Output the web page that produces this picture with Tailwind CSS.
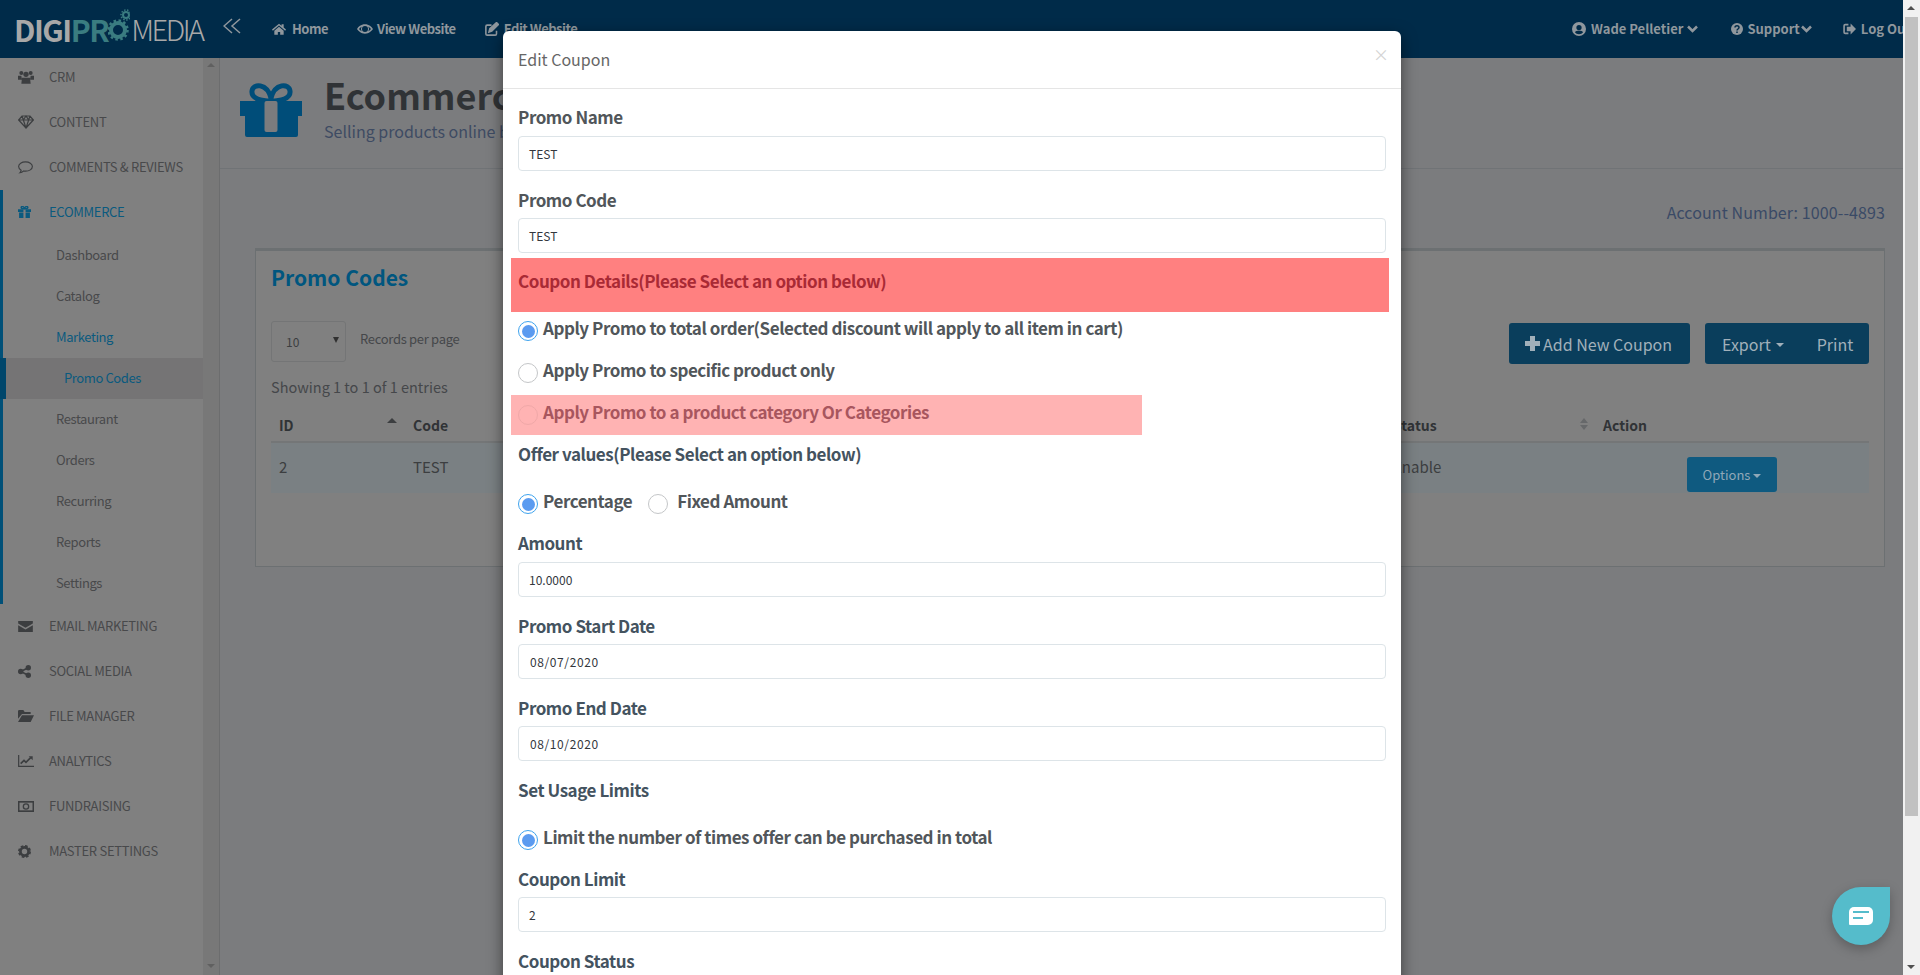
<!DOCTYPE html>
<html lang="en">
<head>
  <meta charset="UTF-8">
  <title>Edit Coupon</title>
  <script src="https://cdn.jsdelivr.net/npm/@tailwindcss/browser@4"></script>
</head>
<body class="h-[975px] overflow-hidden bg-[#7b7c7e] font-['Noto_Sans_CJK_SC','Noto_Sans',sans-serif] text-[#3c3e40]">

  <div class="flex h-[975px]">
    <!-- page -->
    <div class="relative w-[1903px] h-[975px] overflow-hidden shrink-0">

      <!-- top bar -->
      <header class="relative z-10 flex items-center h-[58px] bg-[#002b49] text-[#8f979d] text-[13px] tracking-[-0.5px] font-semibold whitespace-nowrap">
        <div class="relative flex items-center w-[223px] h-full pl-[14px] shrink-0 text-[#a8a8a8]">
          <span class="text-[30px] font-bold tracking-[-1.500px]">DIGI</span><span class="text-[30px] font-bold tracking-[-1.500px] text-[#3a7c80]">PR</span>
          <svg class="w-[22px] h-[34px] ml-[0px] mt-[-8px] shrink-0" viewBox="0 0 22 34" fill="none" stroke="#3a7c80">
            <circle cx="10" cy="22" r="7" stroke-width="4"/>
            <circle cx="10" cy="22" r="9.500" stroke-width="2.500" stroke-dasharray="2.500 2.500"/>
            <circle cx="18" cy="7" r="3" stroke-width="2"/>
            <circle cx="18" cy="7" r="5" stroke-width="1.500" stroke-dasharray="1.500 1.500"/>
          </svg>
          <span class="ml-[1px] text-[29px] font-light tracking-[-2.500px] text-[#a8a8a8]">MEDIA</span>
        </div>
        <svg class="w-[18px] h-[18px] mb-[5px] shrink-0" viewBox="0 0 18 18" fill="none" stroke="#8f979d" stroke-width="1.500"><path d="M9 1 1 8l8 7M17 1 9 8l8 7"/></svg>
        <svg class="ml-[31px] w-[14px] h-[14px] shrink-0" viewBox="0 0 24 24" fill="#8f979d"><path d="M12 3 0 13l1.500 2L12 6l10.500 9 1.500-2-4-3.400V4h-3.500v2.600zM4 15v7h6v-5h4v5h6v-7l-8-6.700z"/></svg>
        <span class="ml-[6px]">Home</span>
        <svg class="ml-[29px] w-[16px] h-[16px] shrink-0" viewBox="0 0 24 24" fill="#8f979d"><path fill-rule="evenodd" d="M12 5C6 5 2 9 0 12c2 3 6 7 12 7s10-4 12-7c-2-3-6-7-12-7zm0 2.500a4.500 4.500 0 1 1 0 9 4.500 4.500 0 0 1 0-9zM3 12c1-1.300 2.300-2.600 4-3.500a6 6 0 0 0 0 7C5.300 14.600 4 13.300 3 12zm14-3.500c1.700.9 3 2.200 4 3.500-1 1.300-2.300 2.600-4 3.500a6 6 0 0 0 0-7z"/></svg>
        <span class="ml-[4px]">View Website</span>
        <svg class="ml-[28px] w-[15px] h-[15px] shrink-0" viewBox="0 0 24 24" fill="none" stroke="#8f979d" stroke-width="2.500"><path d="M20 14v5a2 2 0 0 1-2 2H5a2 2 0 0 1-2-2V7a2 2 0 0 1 2-2h7"/><path stroke-width="4" d="M9 15l1-4L20 2l2 2-10 10z"/></svg>
        <span class="ml-[5px]">Edit Website</span>

        <div class="ml-auto flex items-center w-[331px] shrink-0 overflow-hidden tracking-normal">
          <svg class="w-[14px] h-[14px] shrink-0" viewBox="0 0 24 24" fill="#8f979d"><path fill-rule="evenodd" d="M12 0a12 12 0 1 0 0 24 12 12 0 0 0 0-24zm0 5a4.500 4.500 0 1 1 0 9 4.500 4.500 0 0 1 0-9zm0 16c-3 0-5.500-1.300-7-3.400C6 15.600 8.500 15 12 15s6 .6 7 2.600C17.500 19.700 15 21 12 21z"/></svg>
          <span class="ml-[5px]">Wade Pelletier</span>
          <svg class="ml-[4px] w-[11px] h-[8px] shrink-0" viewBox="0 0 11 8" fill="none" stroke="#8f979d" stroke-width="2.500"><path d="M1 1.500 5.500 6 10 1.500"/></svg>
          <svg class="ml-[33px] w-[12px] h-[12px] shrink-0" viewBox="0 0 24 24"><circle cx="12" cy="12" r="12" fill="#8f979d"/><path d="M8 9c0-5 8-5 8 0 0 3-4 3-4 6M12 17v3" fill="none" stroke="#002b49" stroke-width="3"/></svg>
          <span class="ml-[4px]">Support</span>
          <svg class="ml-[1px] w-[11px] h-[8px] shrink-0" viewBox="0 0 11 8" fill="none" stroke="#8f979d" stroke-width="2.500"><path d="M1 1.500 5.500 6 10 1.500"/></svg>
          <svg class="ml-[31px] w-[13px] h-[12px] shrink-0" viewBox="0 0 24 22" fill="none" stroke="#8f979d" stroke-width="3"><path d="M10 3H4a2 2 0 0 0-2 2v12a2 2 0 0 0 2 2h6"/><path fill="#8f979d" stroke="none" d="M14 1l10 10-10 10v-6H7V7h7z"/></svg>
          <span class="ml-[5px]">Log Out</span>
        </div>
      </header>

      <div class="flex h-[917px]">
        <!-- sidebar -->
        <aside class="flex w-[220px] h-full shrink-0 border-r border-[#6c6d6e] bg-[#808080] overflow-hidden">
          <nav class="w-[203px] shrink-0 -mt-[3px] text-[13px] tracking-[-0.3px] text-[#48494b]">
            <a class="flex items-center h-[45px] pl-[18px] pb-[1px]"><svg class="w-[16px] h-[14px] shrink-0" viewBox="0 0 24 20" fill="#3c3e40"><circle cx="5" cy="4" r="3"/><circle cx="19" cy="4" r="3"/><circle cx="12" cy="6" r="4"/><path d="M0 8h5l1 6H0zM24 8h-5l-1 6h6zM6 11h12l1 9H5z"/></svg><span class="ml-[15px]">CRM</span></a>
            <a class="flex items-center h-[45px] pl-[18px] pb-[1px]"><svg class="w-[16px] h-[14px] shrink-0" viewBox="0 0 24 20" fill="none" stroke="#3c3e40" stroke-width="1.800"><path d="M6 1h12l5 6-11 12L1 7zM1 7h22M8 7l4 12 4-12M6 1l2 6 4-6 4 6 2-6"/></svg><span class="ml-[15px]">CONTENT</span></a>
            <a class="flex items-center h-[45px] pl-[18px] pb-[1px]"><svg class="w-[15px] h-[13px] shrink-0" viewBox="0 0 24 20" fill="none" stroke="#3c3e40" stroke-width="1.800"><path d="M12 1C6 1 1 4 1 8.500c0 2.500 1.500 4.500 4 6-.3 1.500-1 3-2 4 2.500-.3 4.500-1.500 6-3 1 .2 2 .3 3 .3 6 0 11-3 11-7.300S18 1 12 1z"/></svg><span class="ml-[16px]">COMMENTS &amp; REVIEWS</span></a>
            <div class="border-l-[3px] border-[#005078]">
              <a class="flex items-center h-[45px] pl-[15px] pb-[1px] text-[#0a5a7f]"><svg class="w-[13px] h-[12px] shrink-0" viewBox="0 0 24 22" fill="#0a5a7f"><path d="M0 6h24v5H0zM2 12h20v10H2z"/><path d="M10 6h4v16h-4z" fill="#808080"/><path d="M12 5C8 5 5 4 6 2s5-2 6 3c1-5 5-5 6-3s-2 3-6 3z" fill="none" stroke="#0a5a7f" stroke-width="2.500"/></svg><span class="ml-[18px]">ECOMMERCE</span></a>
              <a class="flex items-center h-[41px] pl-[53px] pb-[2px] tracking-[-0.4px]">Dashboard</a>
              <a class="flex items-center h-[41px] pl-[53px] pb-[2px] tracking-[-0.4px]">Catalog</a>
              <a class="flex items-center h-[41px] pl-[53px] pb-[2px] tracking-[-0.4px] text-[#0a5a7f]">Marketing</a>
              <a class="flex items-center h-[41px] pl-[58px] pb-[2px] -ml-[3px] tracking-[-0.4px] border-l-[6px] border-[#00466b] bg-[#757475] text-[#0a5a7f]">Promo Codes</a>
              <a class="flex items-center h-[41px] pl-[53px] pb-[2px] tracking-[-0.4px]">Restaurant</a>
              <a class="flex items-center h-[41px] pl-[53px] pb-[2px] tracking-[-0.4px]">Orders</a>
              <a class="flex items-center h-[41px] pl-[53px] pb-[2px] tracking-[-0.4px]">Recurring</a>
              <a class="flex items-center h-[41px] pl-[53px] pb-[2px] tracking-[-0.4px]">Reports</a>
              <a class="flex items-center h-[41px] pl-[53px] pb-[2px] tracking-[-0.4px]">Settings</a>
            </div>
            <a class="flex items-center h-[45px] pl-[18px] pb-[1px]"><svg class="w-[15px] h-[11px] shrink-0" viewBox="0 0 24 18" fill="#3c3e40"><path d="M0 0h24v4L12 11 0 4zM0 7l12 7 12-7v11H0z"/></svg><span class="ml-[16px]">EMAIL MARKETING</span></a>
            <a class="flex items-center h-[45px] pl-[18px] pb-[1px]"><svg class="w-[13px] h-[13px] shrink-0" viewBox="0 0 24 24" fill="#3c3e40"><circle cx="19" cy="5" r="5"/><circle cx="19" cy="19" r="5"/><circle cx="5" cy="12" r="5"/><path d="M5 12 19 5M5 12l14 7" stroke="#3c3e40" stroke-width="3"/></svg><span class="ml-[18px]">SOCIAL MEDIA</span></a>
            <a class="flex items-center h-[45px] pl-[18px] pb-[1px]"><svg class="w-[16px] h-[12px] shrink-0" viewBox="0 0 24 18" fill="#3c3e40"><path d="M0 2a2 2 0 0 1 2-2h6l2 3h9v3H6L0 13zM6 8h18l-5 10H0z"/></svg><span class="ml-[15px]">FILE MANAGER</span></a>
            <a class="flex items-center h-[45px] pl-[18px] pb-[1px]"><svg class="w-[16px] h-[12px] shrink-0" viewBox="0 0 24 18" fill="none" stroke="#3c3e40" stroke-width="1.800"><path d="M1 0v17h23"/><path stroke-width="2.500" d="M4 13l5-5 3 3 7-7"/><path fill="#3c3e40" stroke="none" d="M16 2h6v6z"/></svg><span class="ml-[15px]">ANALYTICS</span></a>
            <a class="flex items-center h-[45px] pl-[18px] pb-[1px]"><svg class="w-[16px] h-[11px] shrink-0" viewBox="0 0 24 16" fill="none" stroke="#3c3e40" stroke-width="2.500"><rect x="1" y="1" width="22" height="14"/><circle cx="12" cy="8" r="4" stroke-width="2"/></svg><span class="ml-[15px]">FUNDRAISING</span></a>
            <a class="flex items-center h-[45px] pl-[18px] pb-[1px]"><svg class="w-[13px] h-[13px] shrink-0" viewBox="0 0 24 24"><circle cx="12" cy="12" r="7.500" fill="none" stroke="#3c3e40" stroke-width="5"/><circle cx="12" cy="12" r="10.500" fill="none" stroke="#3c3e40" stroke-width="3" stroke-dasharray="5 3.200"/></svg><span class="ml-[18px]">MASTER SETTINGS</span></a>
          </nav>
          <div class="relative w-[16px] shrink-0 bg-[#787878]">
            <span class="absolute left-[4px] top-[5px] border-x-[4px] border-b-[4px] border-x-transparent border-b-[#606060]"></span>
            <span class="absolute left-[4px] bottom-[7px] border-x-[4px] border-t-[4px] border-x-transparent border-t-[#606060]"></span>
          </div>
        </aside>

        <!-- main -->
        <main class="flex-1 min-w-0">
          <div class="flex h-[111px] border-b border-[#707376] pl-[20px] pt-[25px]">
            <svg class="w-[62px] h-[54px] shrink-0" viewBox="0 0 62 54" fill="#004d79">
              <path d="M31 18C22 18 11 16 12 8c1-8 15-8 19 7 4-15 18-15 19-7 1 8-10 10-19 10z" fill="none" stroke="#004d79" stroke-width="5"/>
              <path d="M0 18h62v15h-4v19a2 2 0 0 1-2 2H7a2 2 0 0 1-2-2V33H0z"/>
              <rect x="24.500" y="18" width="13" height="31" rx="2" fill="#7b7c7e"/>
            </svg>
            <div class="ml-[22px] -mt-[6px]">
              <h1 class="text-[36px] leading-[34px] font-bold text-[#303336]">Ecommerce</h1>
              <p class="mt-[8px] text-[16px] leading-[24px] text-[#3e4b63]">Selling products online by</p>
            </div>
          </div>
          <p class="mt-[30px] pr-[18px] text-right text-[16px] tracking-[0.1px] leading-[26px] text-[#3a4a66]">Account Number: 1000--4893</p>
          <section class="ml-[35px] mr-[18px] mt-[23px] h-[319px] border border-t-[3px] border-[#6c7072] bg-[#808080] px-[15px]">
            <h2 class="mt-[11px] text-[21px] leading-[30px] font-semibold text-[#00567f]">Promo Codes</h2>
            <div class="flex mt-[29px] h-[41px]">
              <div class="relative w-[75px] h-[41px] rounded-[3px] border border-[#747576]">
                <span class="absolute left-[14px] top-[12px] text-[12px] leading-[16px]">10</span>
                <span class="absolute left-[61px] top-[15px] border-x-[3px] border-t-[6px] border-x-transparent border-t-[#303030]"></span>
              </div>
              <span class="ml-[14px] mt-[6px] text-[13px] tracking-[-0.3px] leading-[24px] text-[#45474a]">Records per page</span>
              <div class="ml-auto flex gap-[15px] text-[16px] text-[#a1b0ba] mt-[2px]">
                <button class="flex items-center h-[41px] w-[181px] pl-[16px] rounded-[3px] bg-[#0a3e5c]">
                  <svg class="w-[15px] h-[15px] mr-[3px]" viewBox="0 0 15 15" fill="#a1b0ba"><path d="M5 0h5v5h5v5h-5v5H5v-5H0V5h5z"/></svg>Add New Coupon
                </button>
                <div class="flex items-center h-[41px] w-[164px] pl-[17px] rounded-[3px] bg-[#0a3e5c]">
                  <span>Export</span><span class="ml-[5px] mt-[3px] border-x-[4px] border-t-[4px] border-x-transparent border-t-[#a1b0ba]"></span>
                  <span class="ml-[33px]">Print</span>
                </div>
              </div>
            </div>
            <p class="mt-[13px] text-[14.500px] leading-[24px] text-[#45474a]">Showing 1 to 1 of 1 entries</p>
            <div class="mt-[11px] grid grid-cols-[134px_980px_210px_1fr] h-[33px] items-center border-b-[2px] border-[#747677] text-[14px] font-semibold text-[#303336]">
              <div class="relative pl-[8px]">ID<span class="absolute left-[116px] top-[3px] border-x-[5px] border-b-[5px] border-x-transparent border-b-[#3c3e40]"></span></div>
              <div class="pl-[8px]">Code</div>
              <div class="relative pl-[8px]">Status<span class="absolute left-[195px] top-[3px] border-x-[4px] border-b-[5px] border-x-transparent border-b-[#66686a]"></span><span class="absolute left-[195px] top-[10px] border-x-[4px] border-t-[5px] border-x-transparent border-t-[#66686a]"></span></div>
              <div class="pl-[8px]">Action</div>
            </div>
            <div class="grid grid-cols-[134px_980px_210px_1fr] h-[50px] bg-[#7a8083] text-[15px] text-[#3c3e40] pt-[13px]">
              <div class="pl-[8px]">2</div>
              <div class="pl-[8px]">TEST</div>
              <div class="pl-[8px]">Enable</div>
              <div class="pl-[92px]">
                <button class="flex items-center justify-center w-[90px] h-[35px] mt-[1px] rounded-[3px] bg-[#0f5a80] text-[13px] text-[#8fa8b8]">Options<span class="ml-[3px] mt-[2px] border-x-[4px] border-t-[4px] border-x-transparent border-t-[#8fa8b8]"></span></button>
              </div>
            </div>
          </section>
        </main>
      </div>

      <!-- modal -->
      <div class="absolute z-20 left-[503px] top-[31px] w-[898px] h-[1100px] rounded-[6px] bg-white shadow-[0_5px_15px_rgba(0,0,0,0.5)] text-[#51565a]">
        <div class="relative flex items-center h-[58px] pl-[15px] pb-[2px] border-b border-[#e5e5e5] text-[16px] text-[#666]">
          Edit Coupon
          <span class="absolute right-[12px] top-[11px] text-[16px] leading-[24px] text-[#d4d4d4]">×</span>
        </div>
        <div class="pt-[16px] px-[15px] text-[17px] tracking-[-0.45px] font-semibold">
          <label class="block h-[24px] leading-[24px]">Promo Name</label>
          <div class="mt-[7px] mb-[17px] flex items-center h-[35px] pl-[10px] rounded-[4px] border border-[#dde4e8] text-[12px] tracking-normal font-normal text-[#33373d]">TEST</div>
          <label class="block h-[24px] leading-[24px]">Promo Code</label>
          <div class="mt-[6px] flex items-center h-[35px] pl-[10px] rounded-[4px] border border-[#dde4e8] text-[12px] tracking-normal font-normal text-[#33373d]">TEST</div>

          <div class="mt-[5px] -ml-[7px] w-[878px] h-[54px] pl-[7px] pt-[11px] leading-[24px] bg-[#ff8080] text-[#a92a35]">Coupon Details(Please Select an option below)</div>

          <div class="flex h-[34px] -mt-[1px]">
            <span class="flex items-center justify-center w-[20px] h-[20px] mt-[10px] rounded-full border border-[#3ea3ee]"><span class="w-[13px] h-[13px] rounded-full bg-[#5b9bf0]"></span></span>
            <span class="ml-[5px] leading-[34px]">Apply Promo to total order(Selected discount will apply to all item in cart)</span>
          </div>
          <div class="flex h-[34px] mt-[8px]">
            <span class="w-[20px] h-[20px] mt-[10px] rounded-full border border-[#c4c6c8]"></span>
            <span class="ml-[5px] leading-[34px]">Apply Promo to specific product only</span>
          </div>
          <div class="flex h-[40px] mt-[8px] -ml-[7px] w-[631px] pl-[7px] bg-[#ffb3b3] text-[#a8565e]">
            <span class="w-[20px] h-[20px] mt-[10px] rounded-full border border-[#f0a8a8]"></span>
            <span class="ml-[5px] leading-[34px]">Apply Promo to a product category Or Categories</span>
          </div>
          <div class="h-[34px] mt-[2px] leading-[34px] text-[#44535f]">Offer values(Please Select an option below)</div>
          <div class="flex h-[34px] mt-[13px]">
            <span class="flex items-center justify-center w-[20px] h-[20px] mt-[10px] rounded-full border border-[#3ea3ee]"><span class="w-[13px] h-[13px] rounded-full bg-[#5b9bf0]"></span></span>
            <span class="ml-[5px] leading-[34px]">Percentage</span>
            <span class="ml-[16px] w-[20px] h-[20px] mt-[10px] rounded-full border border-[#c4c6c8]"></span>
            <span class="ml-[9px] leading-[34px]">Fixed Amount</span>
          </div>

          <label class="block mt-[13px] h-[24px] leading-[24px] text-[#44535f]">Amount</label>
          <div class="mt-[7px] mb-[17px] flex items-center h-[35px] pl-[10px] rounded-[4px] border border-[#dde4e8] text-[12px] tracking-normal font-normal text-[#33373d]">10.0000</div>
          <label class="block h-[24px] leading-[24px] text-[#44535f]">Promo Start Date</label>
          <div class="mt-[6px] mb-[17px] flex items-center h-[35px] pl-[11px] rounded-[4px] border border-[#dde4e8] text-[12px] tracking-[0.6px] font-normal text-[#33373d]">08/07/2020</div>
          <label class="block h-[24px] leading-[24px] text-[#44535f]">Promo End Date</label>
          <div class="mt-[6px] mb-[17px] flex items-center h-[35px] pl-[11px] rounded-[4px] border border-[#dde4e8] text-[12px] tracking-[0.6px] font-normal text-[#33373d]">08/10/2020</div>
          <label class="block h-[24px] leading-[24px] text-[#44535f]">Set Usage Limits</label>
          <div class="flex h-[34px] mt-[18px]">
            <span class="flex items-center justify-center w-[20px] h-[20px] mt-[10px] rounded-full border border-[#3ea3ee]"><span class="w-[13px] h-[13px] rounded-full bg-[#5b9bf0]"></span></span>
            <span class="ml-[5px] leading-[34px]">Limit the number of times offer can be purchased in total</span>
          </div>
          <label class="block mt-[13px] h-[24px] leading-[24px] text-[#44535f]">Coupon Limit</label>
          <div class="mt-[6px] mb-[17px] flex items-center h-[35px] pl-[10px] rounded-[4px] border border-[#dde4e8] text-[12px] tracking-normal font-normal text-[#33373d]">2</div>
          <label class="block h-[24px] leading-[24px] text-[#44535f]">Coupon Status</label>
        </div>
      </div>

      <!-- chat bubble -->
      <div class="absolute z-30 left-[1832px] top-[887px] flex items-center justify-center w-[58px] h-[58px] rounded-full rounded-tr-[6px] bg-[#55bccb] shadow-[0_4px_12px_rgba(0,0,0,0.25)]">
        <svg class="w-[24px] h-[18px]" viewBox="0 0 24 18"><path d="M5 0h14a5 5 0 0 1 5 5v8a5 5 0 0 1-5 5H1a1 1 0 0 1-1-1V5a5 5 0 0 1 5-5z" fill="#fff"/><path d="M4 5h16M4 11h10" stroke="#55bccb" stroke-width="2"/></svg>
      </div>
    </div>

    <!-- browser scrollbar -->
    <div class="relative w-[17px] h-[975px] bg-[#f1f1f1]">
      <span class="absolute left-[4px] top-[6px] border-x-[4px] border-b-[4px] border-x-transparent border-b-[#505050]"></span>
      <div class="absolute left-[2px] top-[17px] w-[13px] h-[799px] bg-[#c1c1c1]"></div>
      <span class="absolute left-[4px] bottom-[6px] border-x-[4px] border-t-[4px] border-x-transparent border-t-[#505050]"></span>
    </div>
  </div>

</body>
</html>
